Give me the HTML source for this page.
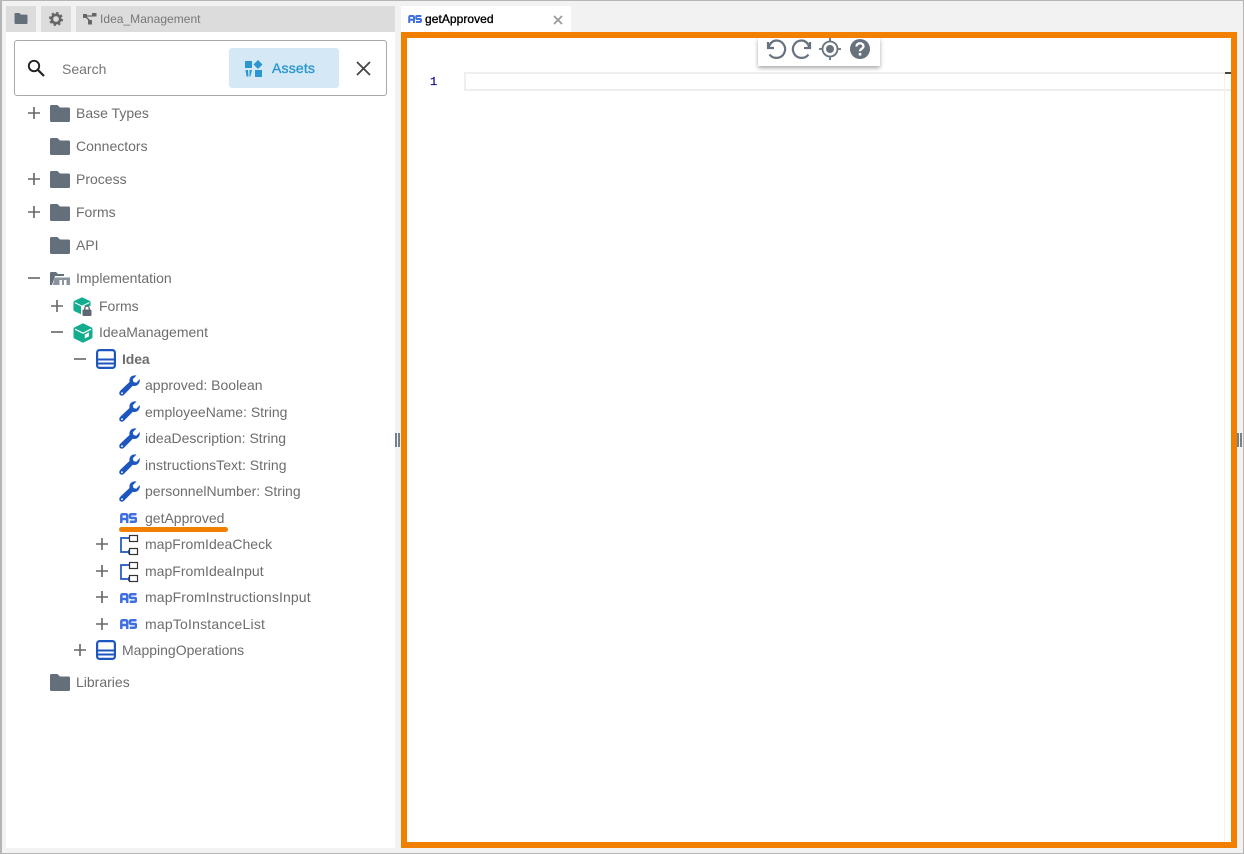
<!DOCTYPE html>
<html><head><meta charset="utf-8"><style>
html,body{margin:0;padding:0;width:1244px;height:854px;overflow:hidden;background:#f2f2f2;font-family:"Liberation Sans",sans-serif;}
.a{position:absolute;}
#frame{position:absolute;left:0;top:0;width:1244px;height:854px;box-sizing:border-box;border-top:1px solid #b5b5b5;border-left:2px solid #b5b5b5;border-right:1px solid #b5b5b5;border-bottom:1px solid #b5b5b5;pointer-events:none;}
.t{position:absolute;font-size:14px;line-height:18px;color:#6d6d6d;white-space:nowrap;}
svg{position:absolute;overflow:visible;}
</style></head><body>
<svg width="0" height="0" style="position:absolute"><defs>
<symbol id="folder" viewBox="0 0 20 17"><path d="M0 1.500Q0 0 1.500 0H7.500L10 2.500H18.500Q20 2.500 20 4V15.500Q20 17 18.500 17H1.500Q0 17 0 15.500Z" fill="#646f7c"/></symbol>
<symbol id="plus" viewBox="0 0 12 12"><path d="M6 0V12M0 6H12" stroke="#666" stroke-width="1.600" fill="none"/></symbol>
<symbol id="minus" viewBox="0 0 12 12"><path d="M0 6H12" stroke="#666" stroke-width="1.600" fill="none"/></symbol>
<symbol id="wrench" viewBox="0 0 21 21"><path d="M1.500 15.500L10.500 7C9.800 3 12.500 -0.300 17.500 0.500L13.800 4.200L14.500 7L17.300 7.700L20.800 4C21.300 9 17.500 12 13.800 10.700L5 19.800C3.800 21 1.800 21 0.800 19.800C-0.200 18.500 0.300 16.700 1.500 15.500Z" fill="#1e56c0"/><circle cx="3" cy="18.200" r="0.900" fill="#fff"/></symbol>
<symbol id="box" viewBox="0 0 20 20"><path d="M10 0.800L18.300 4.800Q19 5.200 19 6V14Q19 14.800 18.300 15.200L10 19.200L1.700 15.200Q1 14.800 1 14V6Q1 5.200 1.700 4.800Z" fill="#12ad8e" stroke="#12ad8e" stroke-width="1"/><path d="M2 6.200L10 10.200L18 6.200" fill="none" stroke="#fff" stroke-width="1.200"/><path d="M11.800 11.500L16 9.400V13.400L11.800 15.500Z" fill="#fff"/></symbol>
<symbol id="cls" viewBox="0 0 20 20"><rect x="1.100" y="1.100" width="17.800" height="17.800" rx="2.500" fill="#fff" stroke="#1e56c0" stroke-width="2.200"/><path d="M1 10.500H19M1 14.500H19" stroke="#1e56c0" stroke-width="2"/></symbol>
<symbol id="map" viewBox="0 0 20 22"><path d="M10 4H2V18H11" fill="none" stroke="#1e56c0" stroke-width="1.700"/><path d="M9 15.800L12.500 18L9 20.200Z" fill="#1e56c0"/><rect x="10.500" y="1.500" width="8" height="6" fill="#fff" stroke="#333" stroke-width="1.200"/><rect x="10.500" y="14.500" width="8" height="6" fill="#fff" stroke="#333" stroke-width="1.200"/></symbol>
<symbol id="as" viewBox="0 0 17 10"><path d="M1.300 10V2.800Q1.300 1.300 2.800 1.300H5.700Q7.200 1.300 7.200 2.800V10M1.300 6H7.200" fill="none" stroke="#3f6fe0" stroke-width="2.500"/><path d="M16.500 1.300H11.300Q10 1.300 10 2.600V3.800Q10 5 11.300 5H14.700Q16 5 16 6.200V7.400Q16 8.700 14.700 8.700H9.800" fill="none" stroke="#3f6fe0" stroke-width="2.500"/></symbol>
</defs></svg>

<!-- left panel -->
<div class="a" style="left:6px;top:32px;width:389px;height:816px;background:#fff"></div>
<div class="a" style="left:6px;top:6px;width:30px;height:26px;background:#dcdcdc"></div>
<div class="a" style="left:41px;top:6px;width:30px;height:26px;background:#dcdcdc"></div>
<div class="a" style="left:76px;top:6px;width:319px;height:26px;background:#dcdcdc"></div>
<svg style="left:14px;top:13px" width="14" height="11"><use href="#folder" width="14" height="11"/></svg>
<svg style="left:49px;top:12px" width="14" height="14" viewBox="0 0 14 14"><circle cx="7" cy="7" r="4.200" fill="none" stroke="#666" stroke-width="2.600"/><circle cx="7" cy="7" r="5.600" fill="none" stroke="#666" stroke-width="2.800" stroke-dasharray="2.200 2.200"/></svg>
<svg style="left:83px;top:13px" width="14" height="12" viewBox="0 0 14 12"><rect x="0" y="1" width="4" height="4" fill="#666"/><rect x="9" y="0" width="4.500" height="3.500" fill="#666"/><rect x="5" y="7" width="4" height="4.500" fill="#666"/><path d="M3 3H10M3 4L7 8" stroke="#666" stroke-width="1.300"/></svg>
<div class="t" style="left:100px;top:11px;font-size:12px;line-height:16px;color:#777;letter-spacing:.03px">Idea_Management</div>

<!-- search box -->
<div class="a" style="left:14px;top:40px;width:373px;height:56px;box-sizing:border-box;border:1px solid #a8a8a8;border-radius:3px;background:#fff"></div>
<svg style="left:27px;top:59px" width="18" height="18" viewBox="0 0 18 18"><circle cx="7" cy="7" r="5.200" fill="none" stroke="#222" stroke-width="1.900"/><path d="M11 11L17 17" stroke="#222" stroke-width="2.200"/></svg>
<div class="t" style="left:62px;top:60px;color:#757575">Search</div>
<div class="a" style="left:229px;top:48px;width:110px;height:40px;background:#d4e9f5;border-radius:3px"></div>
<svg style="left:245px;top:60px" width="18" height="17" viewBox="0 0 18 17"><rect x="0" y="1" width="7" height="7" fill="#2b96cf"/><path d="M13 0L17.500 4.500L13 9L8.500 4.500Z" fill="#2b96cf"/><path d="M0.500 10H3L3.500 16.500H1.500ZM4.500 10H7L5.500 16.500H4.500Z" fill="#2b96cf"/><rect x="10" y="10" width="7" height="7" fill="#2b96cf"/></svg>
<div class="t" style="left:272px;top:59px;color:#2b96cf;-webkit-text-stroke:.35px #2b96cf;letter-spacing:.18px">Assets</div>
<svg style="left:356px;top:62px" width="14" height="13" viewBox="0 0 14 13"><path d="M1 0L14 13M14 0L1 13" stroke="#444" stroke-width="1.800"/></svg>

<!-- tree -->
<svg style="left:28px;top:107px" width="12" height="12"><use href="#plus" width="12" height="12"/></svg>
<svg style="left:50px;top:105px" width="20" height="17"><use href="#folder" width="20" height="17"/></svg>
<div class="t" style="left:76px;top:104px">Base Types</div>
<svg style="left:50px;top:138px" width="20" height="17"><use href="#folder" width="20" height="17"/></svg>
<div class="t" style="left:76px;top:137px">Connectors</div>
<svg style="left:28px;top:173px" width="12" height="12"><use href="#plus" width="12" height="12"/></svg>
<svg style="left:50px;top:171px" width="20" height="17"><use href="#folder" width="20" height="17"/></svg>
<div class="t" style="left:76px;top:170px">Process</div>
<svg style="left:28px;top:206px" width="12" height="12"><use href="#plus" width="12" height="12"/></svg>
<svg style="left:50px;top:204px" width="20" height="17"><use href="#folder" width="20" height="17"/></svg>
<div class="t" style="left:76px;top:203px">Forms</div>
<svg style="left:50px;top:237px" width="20" height="17"><use href="#folder" width="20" height="17"/></svg>
<div class="t" style="left:76px;top:236px">API</div>
<svg style="left:28px;top:272px" width="12" height="12"><use href="#minus" width="12" height="12"/></svg>
<svg style="left:50px;top:272px" width="20" height="14" viewBox="0 0 20 14"><path d="M0 13V1Q0 0 1 0H6L8 2H14V4H5L2 13Z" fill="#646f7c"/><path d="M4.500 5.500H20V13H3Z" fill="#8a939e"/><path d="M9.500 8H12V13H9.500ZM14 8H16.500V13H14Z" fill="#fff"/></svg>
<div class="t" style="left:76px;top:269px">Implementation</div>

<svg style="left:51px;top:300px" width="12" height="12"><use href="#plus" width="12" height="12"/></svg>
<svg style="left:73px;top:297px" width="19" height="19"><use href="#box" width="18" height="18"/><rect x="8" y="9" width="11" height="11" fill="#fff"/><rect x="9.500" y="12.500" width="9" height="6.500" rx="1" fill="#5f6770"/><path d="M11.800 12.500V11.300A2.200 2.200 0 0 1 16.200 11.300V12.500" fill="none" stroke="#5f6770" stroke-width="1.400"/></svg>
<div class="t" style="left:99px;top:297px">Forms</div>
<svg style="left:51px;top:326px" width="12" height="12"><use href="#minus" width="12" height="12"/></svg>
<svg style="left:73px;top:323px" width="20" height="20"><use href="#box" width="20" height="20"/></svg>
<div class="t" style="left:99px;top:323px">IdeaManagement</div>
<svg style="left:74px;top:353px" width="12" height="12"><use href="#minus" width="12" height="12"/></svg>
<svg style="left:96px;top:349px" width="20" height="20"><use href="#cls" width="20" height="20"/></svg>
<div class="t" style="left:122px;top:350px;font-weight:bold;letter-spacing:-.1px">Idea</div>

<svg style="left:119px;top:375px" width="21" height="21"><use href="#wrench" width="21" height="21"/></svg>
<div class="t" style="left:145px;top:376px">approved: Boolean</div>
<svg style="left:119px;top:401px" width="21" height="21"><use href="#wrench" width="21" height="21"/></svg>
<div class="t" style="left:145px;top:403px">employeeName: String</div>
<svg style="left:119px;top:428px" width="21" height="21"><use href="#wrench" width="21" height="21"/></svg>
<div class="t" style="left:145px;top:429px;letter-spacing:.01px">ideaDescription: String</div>
<svg style="left:119px;top:454px" width="21" height="21"><use href="#wrench" width="21" height="21"/></svg>
<div class="t" style="left:145px;top:456px;letter-spacing:.03px">instructionsText: String</div>
<svg style="left:119px;top:481px" width="21" height="21"><use href="#wrench" width="21" height="21"/></svg>
<div class="t" style="left:145px;top:482px">personnelNumber: String</div>

<svg style="left:120px;top:513px" width="17" height="10"><use href="#as" width="17" height="10"/></svg>
<div class="t" style="left:145px;top:509px">getApproved</div>
<div class="a" style="left:119px;top:527px;width:109px;height:5px;background:#f28000;border-radius:3px"></div>

<svg style="left:96px;top:538px" width="12" height="12"><use href="#plus" width="12" height="12"/></svg>
<svg style="left:119px;top:534px" width="20" height="22"><use href="#map" width="20" height="22"/></svg>
<div class="t" style="left:145px;top:535px;letter-spacing:.02px">mapFromIdeaCheck</div>
<svg style="left:96px;top:565px" width="12" height="12"><use href="#plus" width="12" height="12"/></svg>
<svg style="left:119px;top:561px" width="20" height="22"><use href="#map" width="20" height="22"/></svg>
<div class="t" style="left:145px;top:562px;letter-spacing:.02px">mapFromIdeaInput</div>
<svg style="left:96px;top:591px" width="12" height="12"><use href="#plus" width="12" height="12"/></svg>
<svg style="left:120px;top:593px" width="17" height="10"><use href="#as" width="17" height="10"/></svg>
<div class="t" style="left:145px;top:588px;letter-spacing:.13px">mapFromInstructionsInput</div>
<svg style="left:96px;top:618px" width="12" height="12"><use href="#plus" width="12" height="12"/></svg>
<svg style="left:120px;top:619px" width="17" height="10"><use href="#as" width="17" height="10"/></svg>
<div class="t" style="left:145px;top:615px;letter-spacing:.2px">mapToInstanceList</div>
<svg style="left:74px;top:644px" width="12" height="12"><use href="#plus" width="12" height="12"/></svg>
<svg style="left:96px;top:640px" width="20" height="20"><use href="#cls" width="20" height="20"/></svg>
<div class="t" style="left:122px;top:641px">MappingOperations</div>
<svg style="left:50px;top:674px" width="20" height="17"><use href="#folder" width="20" height="17"/></svg>
<div class="t" style="left:76px;top:673px">Libraries</div>

<!-- splitters -->
<div class="a" style="left:395px;top:433px;width:2px;height:14px;background:#74808c"></div>
<div class="a" style="left:398px;top:433px;width:2px;height:14px;background:#74808c"></div>
<div class="a" style="left:1237px;top:433px;width:2px;height:14px;background:#74808c"></div>
<div class="a" style="left:1240px;top:433px;width:2px;height:14px;background:#74808c"></div>

<!-- tab -->
<div class="a" style="left:401px;top:6px;width:170px;height:26px;background:#fff"></div>
<svg style="left:408px;top:15px" width="14" height="8"><use href="#as" width="14" height="8" preserveAspectRatio="none"/></svg>
<div class="t" style="left:425px;top:11px;font-size:12px;line-height:16px;color:#000;-webkit-text-stroke:.35px #000;letter-spacing:.05px">getApproved</div>
<svg style="left:554px;top:16px" width="8" height="8" viewBox="0 0 8 8"><path d="M0 0L8 8M8 0L0 8" stroke="#9a9a9a" stroke-width="1.800"/></svg>

<!-- editor -->
<div class="a" style="left:401px;top:32px;width:836px;height:816px;box-sizing:border-box;border:6px solid #f28000;background:#fff"></div>
<div class="a" style="left:430px;top:74px;font:12px/16px 'Liberation Mono',monospace;color:#12128a;-webkit-text-stroke:.2px #12128a">1</div>
<div class="a" style="left:464px;top:72px;width:767px;height:19px;box-sizing:border-box;border:2px solid #eeeeee;border-right:0"></div>
<div class="a" style="left:1225px;top:72px;width:6px;height:2px;background:#444"></div>
<div class="a" style="left:1224px;top:74px;width:1px;height:768px;background:#f0f0f0"></div>

<!-- toolbar -->
<div class="a" style="left:758px;top:38px;width:122px;height:28px;background:#fff;box-shadow:0 2px 4px rgba(0,0,0,.35)"></div>
<svg style="left:765px;top:38px" width="22" height="22" viewBox="0 0 22 22"><path d="M3 4V10H9" fill="none" stroke="#68727d" stroke-width="2.200"/><path d="M3.500 9.500C5 5 8 2.500 11.500 2.500A8.700 8.700 0 1 1 4.500 16.500" fill="none" stroke="#68727d" stroke-width="2.200"/></svg>
<svg style="left:791px;top:38px" width="22" height="22" viewBox="0 0 22 22"><path d="M19 4V10H13" fill="none" stroke="#68727d" stroke-width="2.200"/><path d="M18.500 9.500C17 5 14 2.500 10.500 2.500A8.700 8.700 0 1 0 17.500 16.500" fill="none" stroke="#68727d" stroke-width="2.200"/></svg>
<svg style="left:819px;top:38px" width="22" height="22" viewBox="0 0 22 22"><circle cx="11" cy="11" r="7.500" fill="none" stroke="#68727d" stroke-width="1.800"/><circle cx="11" cy="11" r="4" fill="#68727d"/><path d="M11 0V3.500M11 18.500V22M0 11H3.500M18.500 11H22" stroke="#68727d" stroke-width="1.800"/></svg>
<svg style="left:850px;top:39px" width="20" height="20" viewBox="0 0 20 20"><circle cx="10" cy="10" r="10" fill="#68727d"/><path d="M6.500 7.500C6.500 5.500 8 4.300 10 4.300C12 4.300 13.500 5.500 13.500 7.300C13.500 9.800 10 9.800 10 12.300" fill="none" stroke="#fff" stroke-width="2.300"/><rect x="8.800" y="14" width="2.500" height="2.500" fill="#fff"/></svg>

<div class="a" style="left:401px;top:32px;width:836px;height:6px;background:#f28000"></div>
<div id="frame"></div>
</body></html>
